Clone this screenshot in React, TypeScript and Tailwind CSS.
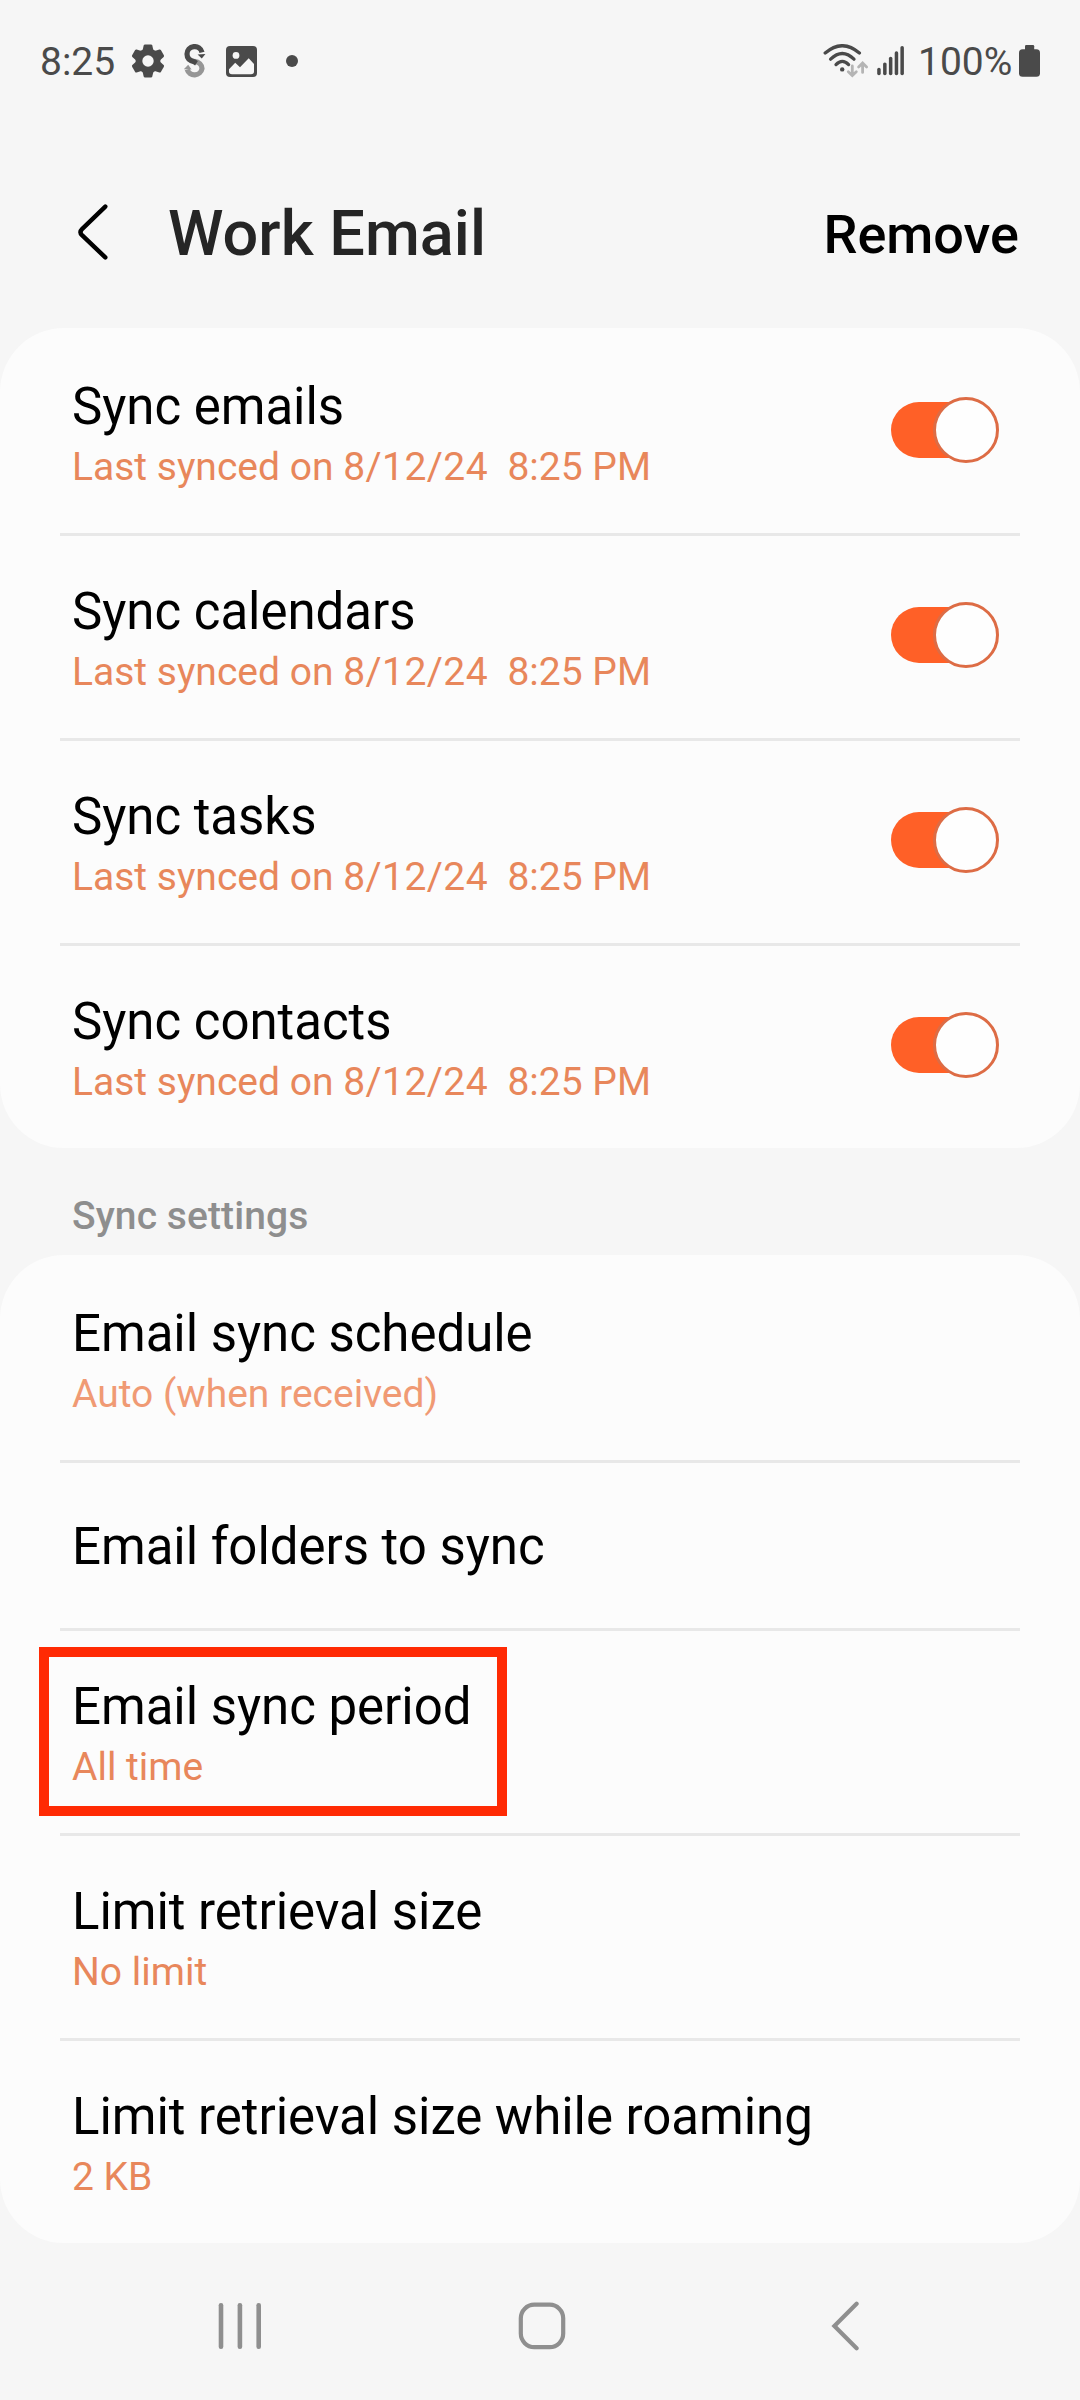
import type { ReactNode } from 'react'
import clsx from 'clsx'

const syncItems = ['Sync emails', 'Sync calendars', 'Sync tasks', 'Sync contacts']

const settings: { title: string; value?: string; muted?: boolean; highlighted?: boolean }[] = [
  { title: 'Email sync schedule', value: 'Auto (when received)', muted: true },
  { title: 'Email folders to sync' },
  { title: 'Email sync period', value: 'All time', highlighted: true },
  { title: 'Limit retrieval size', value: 'No limit' },
  { title: 'Limit retrieval size while roaming', value: '2 KB' },
]

function GearIcon() {
  return (
    <svg className="w-[34px] h-[34px] ml-[17px]" viewBox="-17 -17 34 34" fill="#4a4a4a">
      <circle r="12.4" />
      {[0, 60, 120, 180, 240, 300].map((a) => (
        <path key={a} transform={`rotate(${a})`} d="M-5.6 -10 L-4.3 -15.6 Q-4 -16.6 -3 -16.6 H3 Q4 -16.6 4.3 -15.6 L5.6 -10 Z" />
      ))}
      <circle r="5.7" fill="#f6f6f6" />
    </svg>
  )
}

function SwirlIcon() {
  return (
    <svg className="w-[22px] h-[35px] ml-[19px]" viewBox="184 44 22 35" fill="none" strokeWidth="5.2">
      <path d="M194.5 61.3 C199 61.8 202 65 202 68.6 A7.6 7.4 0 0 1 187.2 69.5" stroke="#969696" />
      <path d="M183.8 69.3 L188.2 64.8 L191.6 69.6 Z" fill="#969696" />
      <path d="M202 52.3 A7.6 7.4 0 0 0 187 54 C187 58 189.5 60.6 194 61.6 L196.5 63.2" stroke="#4a4a4a" />
      <path d="M197.6 54.4 L201.8 58.4 L205.4 54 Z" fill="#4a4a4a" />
    </svg>
  )
}

function PhotoIcon() {
  return (
    <svg className="w-[31px] h-[31px] ml-[20px]" viewBox="226 46 31 31">
      <rect x="226" y="46" width="31" height="31" rx="4" fill="#4a4a4a" />
      <circle cx="236" cy="55.4" r="3.4" fill="#f6f6f6" />
      <path d="M229 69.3 L235.2 62.7 L240 67.3 L248.7 58.3 L254 64 V71.5 Q254 74.3 251 74.3 H232 Q229 74.3 229 71.5 Z" fill="#f6f6f6" />
    </svg>
  )
}

function WifiIcon() {
  return (
    <svg className="w-[46px] h-[34px]" viewBox="823 44 46 34" fill="none" stroke="#4a4a4a" strokeWidth="3.3" strokeLinecap="round">
      <path d="M825.2 53 Q842.3 38.4 859.4 53" />
      <path d="M830.6 59.2 Q842.3 47.6 854 59.2" />
      <path d="M836 64.6 Q842.3 58.2 848.6 64.6" />
      <circle cx="842.2" cy="69.4" r="2.2" fill="#4a4a4a" stroke="none" />
      <g stroke="#b4b4b4" strokeWidth="2.8">
        <path d="M852.3 66 V75.2 M848.3 71.8 L852.3 75.6 L856.3 71.8" />
        <path d="M862.6 72.4 V63.6 M858.6 67 L862.6 63 L866.6 67" />
      </g>
    </svg>
  )
}

function SignalIcon() {
  return (
    <svg className="w-[28px] h-[30px] ml-[8px]" viewBox="877 46 28 30" fill="#4a4a4a">
      <rect x="877.2" y="67.8" width="3.5" height="7.4" rx="1.7" />
      <rect x="883.1" y="62.4" width="3.5" height="12.8" rx="1.7" />
      <rect x="888.9" y="56.8" width="3.5" height="18.4" rx="1.7" />
      <rect x="894.7" y="51.2" width="3.5" height="24" rx="1.7" />
      <rect x="900.4" y="46" width="3.5" height="29.2" rx="1.7" />
    </svg>
  )
}

function BatteryIcon() {
  return (
    <svg className="w-[21px] h-[32px] ml-[6px]" viewBox="0 0 21 32" fill="#4a4a4a">
      <rect x="6" y="0" width="9.2" height="8" rx="1.2" />
      <rect x="0" y="4.2" width="21" height="27.6" rx="3.6" />
    </svg>
  )
}

function Toggle() {
  return (
    <span className="relative mb-[2px] flex h-[66px] w-[108px] items-center">
      <span className="h-[56px] w-[84px] rounded-l-full bg-[#ff6027]" />
      <span className="absolute right-0 top-0 h-[66px] w-[66px] rounded-full border-3 border-[#dd6c45] bg-[#fefefe]" />
    </span>
  )
}

function Row({ first, short, children }: { first?: boolean; short?: boolean; children: ReactNode }) {
  return (
    <div
      className={clsx(
        'relative mx-[60px] flex items-center justify-between border-t-3 pl-[12px] pr-[21px] pb-[3px]',
        short ? 'h-[168px]' : 'h-[205px]',
        first ? 'border-transparent' : 'border-[#e8e8e8]',
      )}
    >
      {children}
    </div>
  )
}

function Label({ title, value, muted }: { title: string; value?: ReactNode; muted?: boolean }) {
  return (
    <div className="pt-[5px]">
      <div className="whitespace-pre text-[51px] leading-[60px] tracking-[-0.04px] text-black">{title}</div>
      {value && (
        <div className={clsx('mt-[7px] whitespace-pre text-[39px] leading-[46px]', muted ? 'text-[#f09a74]' : 'text-[#e8875b]')}>
          {value}
        </div>
      )}
    </div>
  )
}

function LastSynced() {
  return (
    <>
      Last synced on <span className="tracking-[0.45px]">8/12/24</span>{'  8:25 PM'}
    </>
  )
}

export default function App() {
  return (
    <div className="flex h-[2400px] w-[1080px] flex-col overflow-hidden bg-[#f6f6f6] font-['Roboto','Liberation_Sans',sans-serif]">
      <div className="flex h-[122px] items-center justify-between pl-[40px] pr-[40px] text-[39px] leading-[46px] text-[#4a4a4a]">
        <div className="flex items-center">
          <span className="w-[74px] pt-[2px]">8:25</span>
          <GearIcon />
          <SwirlIcon />
          <PhotoIcon />
          <span className="ml-[29px] h-[12px] w-[12px] rounded-full bg-[#4a4a4a]" />
        </div>
        <div className="flex items-center">
          <WifiIcon />
          <SignalIcon />
          <span className="ml-[13px] w-[95px] pt-[2px]">100%</span>
          <BatteryIcon />
        </div>
      </div>

      <header className="flex h-[206px] items-center pl-[76px] pr-[61px] pt-[14px]">
        <svg className="h-[60px] w-[34px]" viewBox="76 202 34 60" fill="none" stroke="#000" strokeWidth="4.4" strokeLinecap="round">
          <path d="M105.3 206.6 L82 229.2 Q79 232.2 82 235.2 L105.3 257.4" />
        </svg>
        <h1 className="ml-[58px] pt-[4px] text-[63px] font-medium leading-[74px] tracking-[0.05px] text-[#252525]">Work Email</h1>
        <button className="ml-auto pt-[5px] text-[54px] font-medium leading-[64px] text-black">Remove</button>
      </header>

      <section className="rounded-[64px] bg-[#fcfcfc]">
        {syncItems.map((title, i) => (
          <Row key={title} first={i === 0}>
            <Label title={title} value={<LastSynced />} />
            <Toggle />
          </Row>
        ))}
      </section>

      <h2 className="h-[107px] pl-[72px] pt-[45px] text-[39px] font-medium leading-[46px] tracking-[0.08px] text-[#8e8e8e]">Sync settings</h2>

      <section className="rounded-[64px] bg-[#fcfcfc]">
        {settings.map((s, i) => (
          <Row key={s.title} first={i === 0} short={!s.value}>
            <Label title={s.title} value={s.value} muted={s.muted} />
            {s.highlighted && (
              <span className="absolute left-[-21px] top-[16px] h-[169px] w-[468px] border-10 border-[#ff2a04]" />
            )}
          </Row>
        ))}
      </section>

      <nav className="flex h-[157px] items-start pl-[218px] pt-[58px]">
        <svg className="h-[50px] w-[44px]" viewBox="218 2301 44 50" fill="#8f8f8f">
          <rect x="218.7" y="2303" width="4.6" height="46" rx="2.2" />
          <rect x="237.6" y="2303" width="4.6" height="46" rx="2.2" />
          <rect x="256.4" y="2303" width="4.6" height="46" rx="2.2" />
        </svg>
        <svg className="ml-[255px] h-[50px] w-[50px]" viewBox="517 2301 50 50" fill="none" stroke="#8f8f8f" strokeWidth="4.2">
          <rect x="520.8" y="2304.7" width="42.4" height="42.4" rx="13.5" />
        </svg>
        <svg className="ml-[263px] h-[50px] w-[32px]" viewBox="830 2301 32 50" fill="none" stroke="#8f8f8f" strokeWidth="4.2" strokeLinecap="round">
          <path d="M856.6 2303.8 L834.4 2326 L856.6 2348.2" />
        </svg>
      </nav>
    </div>
  )
}
